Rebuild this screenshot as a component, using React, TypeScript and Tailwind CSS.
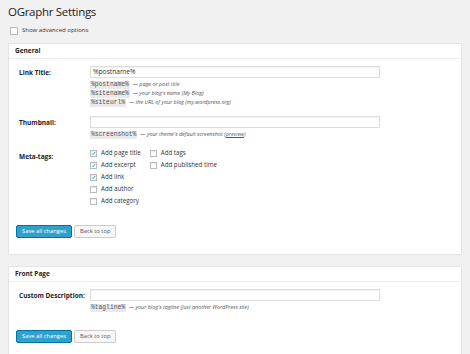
import React from "react";

const font = { fontFamily: '"Open Sans", "Liberation Sans", sans-serif' };

function Code({ children }: { children: React.ReactNode }) {
  return (
    <code className="bg-[#eaeaea] px-[1px] font-['Liberation_Mono',monospace] text-[6.3px] leading-[8px] text-[#555]">
      {children}
    </code>
  );
}

function Hint({ code, children }: { code: string; children: React.ReactNode }) {
  return (
    <div className="flex h-[9px] items-center gap-[3px]">
      <Code>{code}</Code>
      <span className="text-[5.4px] italic text-[#555]">{children}</span>
    </div>
  );
}

function Check({ label, checked }: { label: string; checked?: boolean }) {
  return (
    <div className="flex h-[12px] items-center gap-[4px]">
      <span className="flex size-[7px] items-center justify-center border border-[#bbb] bg-white shadow-[inset_0_1px_1px_rgba(0,0,0,0.08)]">
        {checked && (
          <svg viewBox="0 0 10 10" className="size-[7px]">
            <path d="M2 5.2 L4 7.3 L8.2 2" fill="none" stroke="#1e8cbe" strokeWidth="1.8" />
          </svg>
        )}
      </span>
      <span className="text-[6.2px] text-[#333]">{label}</span>
    </div>
  );
}

function Row({ label, children }: { label: string; children: React.ReactNode }) {
  return (
    <div className="flex">
      <div className="w-[71px] pt-[2px] text-[6.5px] font-bold text-[#222]">{label}</div>
      <div className="flex-1">{children}</div>
    </div>
  );
}

function Input({ value }: { value?: string }) {
  return (
    <div className="flex h-[12px] w-[290px] items-center border border-[#ddd] bg-white px-[2px] text-[6.7px] text-[#333] shadow-[inset_0_1px_1px_rgba(0,0,0,0.05)]">
      {value}
    </div>
  );
}

function Buttons() {
  return (
    <div className="flex gap-[2px]">
      <button className="h-[13px] rounded-[2px] border border-[#0074a2] bg-[#2ea2cc] px-[5px] text-[5.8px] leading-none text-white">
        Save all changes
      </button>
      <button className="h-[13px] rounded-[2px] border border-[#ccc] bg-[#f7f7f7] px-[5px] text-[5.8px] leading-none text-[#555]">
        Back to top
      </button>
    </div>
  );
}

function Panel({ title, children }: { title: string; children: React.ReactNode }) {
  return (
    <div className="border border-[#e5e5e5] bg-white">
      <div className="flex h-[15px] items-center border-b border-[#eee] px-[6px] text-[6.5px] font-bold text-[#222]">
        {title}
      </div>
      {children}
    </div>
  );
}

export default function App() {
  return (
    <div style={font} className="h-[354px] w-[470px] overflow-hidden bg-[#f1f1f1] px-[8px] pt-[3px]">
      <h2 className="text-[11.5px] leading-[18px] tracking-[-0.3px] text-[#222]">OGraphr Settings</h2>
      <div className="mt-[5px] flex items-center gap-[4px] pl-[2px]">
        <span className="size-[8px] border border-[#bbb] bg-white" />
        <span className="text-[6px] text-[#333]">Show advanced options</span>
      </div>
      <div className="mt-[8px]">
        <Panel title="General">
          <div className="px-[10px] pb-[16px] pt-[7px]">
            <Row label="Link Title:">
              <Input value="%postname%" />
              <div className="mt-[2px]">
                <Hint code="%postname%">— page or post title</Hint>
                <Hint code="%sitename%">— your blog's name (My Blog)</Hint>
                <Hint code="%siteurl%">— the URL of your blog (my.wordpress.org)</Hint>
              </div>
            </Row>
            <div className="mt-[9px]">
              <Row label="Thumbnail:">
                <Input />
                <div className="mt-[2px]">
                  <Hint code="%screenshot%">
                    — your theme's default screenshot (
                    <span className="text-[#0074a2] underline">preview</span>)
                  </Hint>
                </div>
              </Row>
            </div>
            <div className="mt-[11px]">
              <Row label="Meta-tags:">
                <div className="-mt-[3px] flex gap-[9px]">
                  <div>
                    <Check label="Add page title" checked />
                    <Check label="Add excerpt" checked />
                    <Check label="Add link" checked />
                    <Check label="Add author" />
                    <Check label="Add category" />
                  </div>
                  <div>
                    <Check label="Add tags" />
                    <Check label="Add published time" />
                  </div>
                </div>
              </Row>
            </div>
            <div className="-ml-[3px] mt-[18px]">
              <Buttons />
            </div>
          </div>
        </Panel>
      </div>
      <div className="mt-[11px]">
        <Panel title="Front Page">
          <div className="px-[10px] pb-[16px] pt-[7px]">
            <Row label="Custom Description:">
              <Input />
              <div className="mt-[2px]">
                <Hint code="%tagline%">— your blog's tagline (Just another WordPress site)</Hint>
              </div>
            </Row>
            <div className="-ml-[3px] mt-[18px]">
              <Buttons />
            </div>
          </div>
        </Panel>
      </div>
    </div>
  );
}
